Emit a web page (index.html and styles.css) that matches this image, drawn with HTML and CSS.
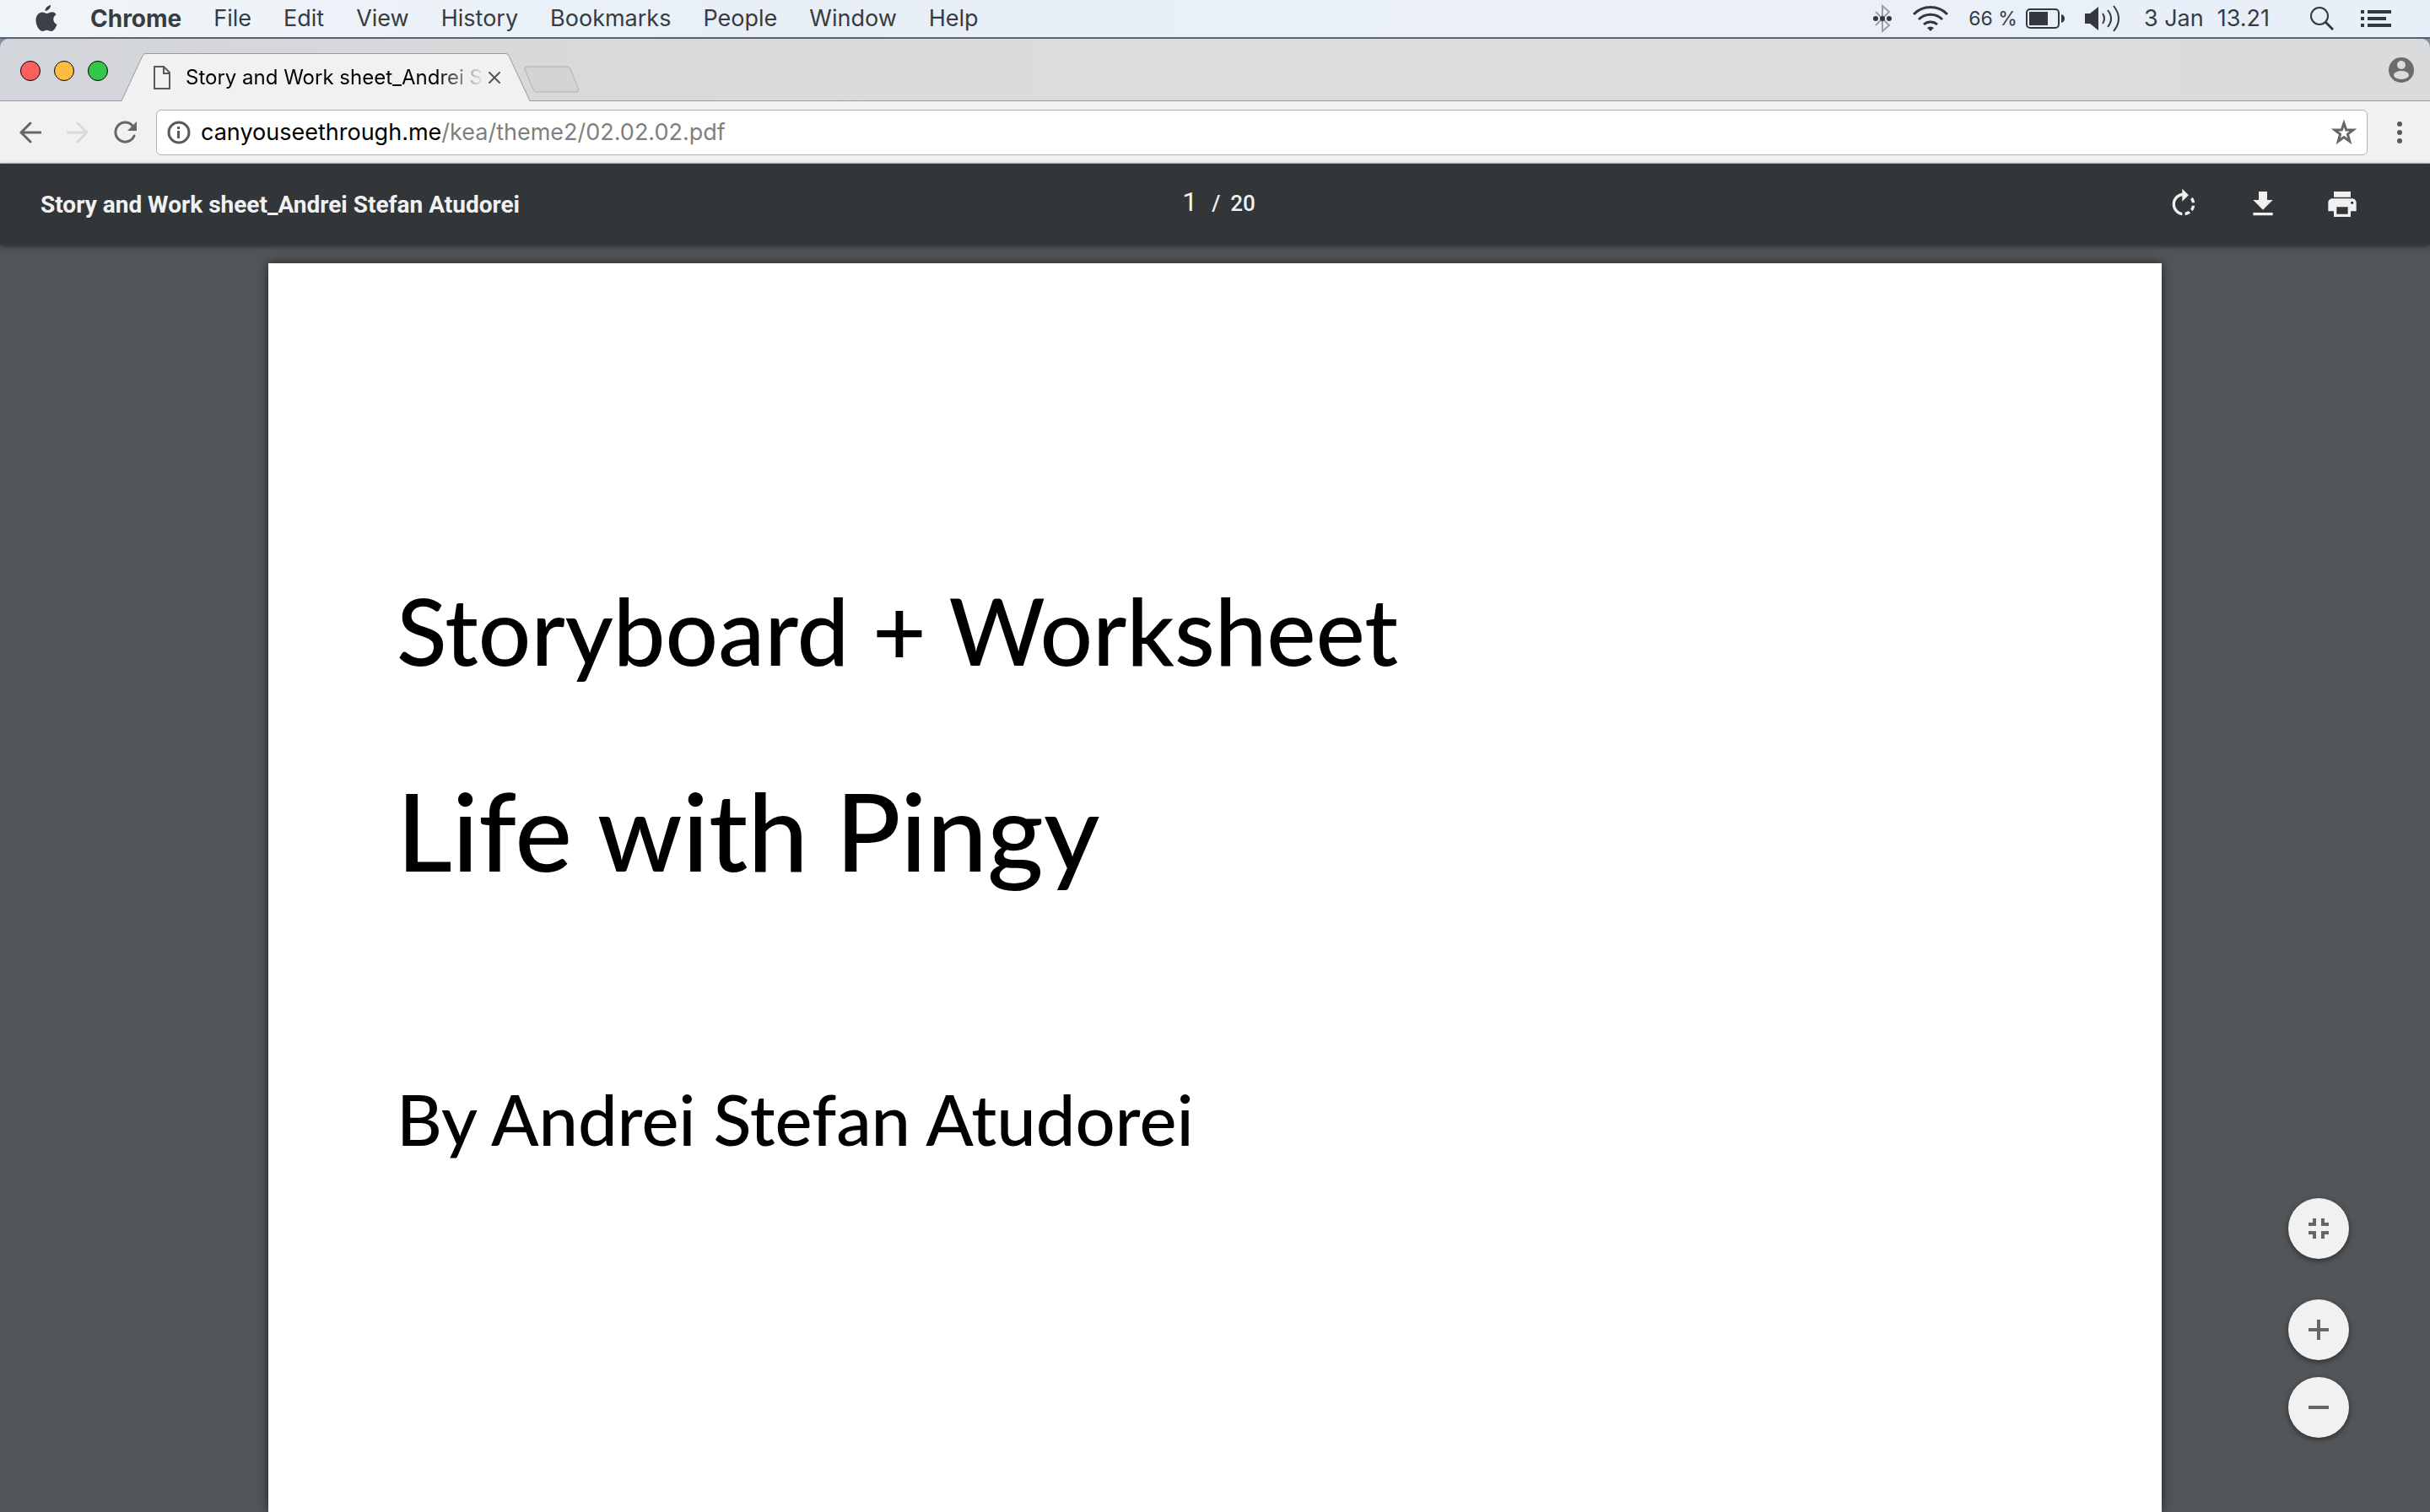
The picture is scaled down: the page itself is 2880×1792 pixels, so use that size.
FILE: index.html
```html
<!DOCTYPE html>
<html lang="en">
<head>
<meta charset="utf-8">
<title>Story and Work sheet_Andrei Stefan Atudorei</title>
<link rel="stylesheet" href="styles.css">
</head>
<body>
<header class="menubar">
  <nav class="menus" aria-label="Application menu">
    <button class="menu apple" aria-label="Apple menu"><svg width="28" height="34" viewBox="0 0 28 34"><path d="M19 1c.3 3-2.700 7-6.500 6.900C12.200 5 15.500 1.500 19 1zM25.500 12.200c-5 3.200-3.800 9.600 1 11.700-1.300 3.600-3.900 8.100-6.800 8.100-2 0-2.600-1.300-5.100-1.300S11.300 32 9.500 32C5.500 32 1.500 24.800 1.500 19c0-6 3.700-9.600 7.600-9.600 2.300 0 3.900 1.500 5.600 1.500 1.700 0 3.300-1.700 6.200-1.700 1.900 0 3.600 1.100 4.600 3z" fill="#3a4045"/></svg></button>
    <button class="menu app">Chrome</button>
    <button class="menu">File</button>
    <button class="menu">Edit</button>
    <button class="menu">View</button>
    <button class="menu">History</button>
    <button class="menu">Bookmarks</button>
    <button class="menu">People</button>
    <button class="menu">Window</button>
    <button class="menu">Help</button>
  </nav>
  <div class="status">
    <svg width="24" height="34" viewBox="0 0 24 34"><path d="M4 9l16 16-8 7V2l8 7L4 25" fill="none" stroke="#9a9fa8" stroke-width="2"/><g fill="#33383f"><circle cx="4" cy="17" r="3"/><circle cx="12" cy="17" r="3"/><circle cx="20" cy="17" r="3"/></g></svg>
    <svg width="42" height="32" viewBox="0 0 42 32"><g fill="none" stroke="#33383f" stroke-width="3"><path d="M1 11a28 28 0 0 1 40 0M7 17a20 20 0 0 1 28 0M13 23a12 12 0 0 1 16 0"/></g><path d="M17 27q4-3 8 0l-4 4z" fill="#33383f"/></svg>
    <span class="battery"><span class="percent">66 %</span><svg width="46" height="24" viewBox="0 0 46 24"><rect x="1" y="1" width="38" height="22" rx="4" fill="none" stroke="#33383f" stroke-width="2"/><rect x="4" y="4" width="22" height="16" fill="#33383f"/><path d="M42 7q4 1 4 5t-4 5z" fill="#33383f"/></svg></span>
    <svg width="42" height="32" viewBox="0 0 42 32"><path d="M0 10h6l10-8v28l-10-8H0z" fill="#33383f"/><g fill="none" stroke="#33383f" stroke-width="2"><path d="M21 10q4 6 0 12M27 6q8 10 0 20M34 1q12 15 0 30"/></g></svg>
    <time class="clock"><span>3 Jan</span><span>13.21</span></time>
    <svg class="search" width="28" height="28" viewBox="0 0 28 28"><g fill="none" stroke="#33383f"><circle cx="11" cy="11" r="10" stroke-width="2"/><path d="M18 18l9 9" stroke-width="3"/></g></svg>
    <svg width="36" height="20" viewBox="0 0 36 20"><path d="M0 0h4v4H0zM8 0h28v4H8zM0 8h4v4H0zM8 8h22v4H8zM0 16h4v4H0zM8 16h28v4H8z" fill="#33383f"/></svg>
  </div>
</header>

<div class="desktop"><div class="tabstrip">
  <div class="lights"><i class="red"></i><i class="yellow"></i><i class="green"></i></div>
  <div class="tab">
    <svg class="tabshape" width="484" height="57" viewBox="0 0 484 57"><path d="M0 57L25 3Q26 .5 29 .5H455Q458 .5 459 3L484 57z" fill="#f1f1f1"/><path d="M0 56.500L25 3Q26 .5 29 .5H455Q458 .5 459 3L484 56.500" fill="none" stroke="#999"/></svg>
    <svg width="20" height="28" viewBox="0 0 20 28"><path d="M1 1h11l7 7v19H1zM12 1v8h7" fill="none" stroke="#5a5a5a" stroke-width="2"/></svg>
    <span class="tabtitle">Story and Work sheet_Andrei S</span>
    <button class="tabclose" aria-label="Close tab"><svg width="14" height="14" viewBox="0 0 14 14"><path d="M1 1l12 12M13 1L1 13" stroke="#555" stroke-width="2" stroke-linecap="round"/></svg></button>
  </div>
  <button class="newtab" aria-label="New tab"><svg width="66" height="32" viewBox="0 0 66 32"><path d="M4 1h47q3 0 4 3l10 24q0 3-3 3H16q-3 0-5-3L1 4q0-3 3-3z" fill="#d3d4d4" stroke="#b0b1b2"/></svg></button>
  <button class="profile" aria-label="Profile"><svg width="30" height="30" viewBox="0 0 30 30"><circle cx="15" cy="15" r="15" fill="#6b6b6b"/><circle cx="15" cy="9" r="5" fill="#dcdcdc"/><ellipse cx="15" cy="21" rx="9" ry="5" fill="#dcdcdc"/></svg></button>
</div></div>

<div class="toolbar">
  <div class="history">
    <button aria-label="Back"><svg width="26" height="26" viewBox="0 0 26 26"><path d="M25 13H2M13 2L2 13l11 11" fill="none" stroke="#666" stroke-width="3" stroke-linecap="round"/></svg></button>
    <button aria-label="Forward" disabled><svg width="26" height="26" viewBox="0 0 26 26"><path d="M1 13h23M13 2l11 11-11 11" fill="none" stroke="#d9d9d9" stroke-width="3" stroke-linecap="round"/></svg></button>
    <button aria-label="Reload"><svg width="28" height="28" viewBox="0 0 28 28"><path d="M22 6A11.500 11.500 0 1 0 24 18" fill="none" stroke="#666" stroke-width="3" stroke-linecap="round"/><path d="M27 1v11H16z" fill="#666"/></svg></button>
  </div>
  <div class="omnibox">
    <svg width="28" height="28" viewBox="0 0 28 28"><circle cx="14" cy="14" r="12" fill="none" stroke="#5a5a5a" stroke-width="3"/><path d="M12 7h3v3h-3zM12 12h3v9h-3z" fill="#5a5a5a"/></svg>
    <a class="url" href="#document"><span class="host">canyouseethrough.me</span>/kea/theme2/02.02.02.pdf</a>
    <button aria-label="Bookmark this page"><svg width="30" height="30" viewBox="0 0 30 30"><path d="M15 4l2.700 8H26l-6.600 5 2.400 8.500L15 20.500l-6.800 5L10.600 17 4 12h8.300z" fill="none" stroke="#666" stroke-width="3"/></svg></button>
  </div>
  <button aria-label="Chrome menu"><svg width="6" height="26" viewBox="0 0 6 26"><g fill="#5a5a5a"><circle cx="3" cy="3" r="3"/><circle cx="3" cy="13" r="3"/><circle cx="3" cy="23" r="3"/></g></svg></button>
</div>

<div class="pdfbar">
  <h1 class="doctitle">Story and Work sheet_Andrei Stefan Atudorei</h1>
  <div class="pager"><input class="pagenum" aria-label="Page number" value="1"><span>/</span><span>20</span></div>
  <div class="actions">
    <button aria-label="Rotate clockwise"><svg viewBox="0 0 24 24"><path d="M15.550 5.550L11 1v3.070C7.060 4.560 4 7.920 4 12s3.050 7.440 7 7.930v-2.020c-2.840-.48-5-2.940-5-5.910s2.160-5.430 5-5.910V10l4.550-4.450zM19.930 11c-.17-1.390-.72-2.730-1.620-3.890l-1.420 1.420c.54.75.88 1.600 1.020 2.470h2.020zM13 17.900v2.020c1.390-.17 2.740-.71 3.900-1.610l-1.440-1.440c-.75.54-1.590.89-2.460 1.030zm3.890-2.420l1.420 1.410c.9-1.160 1.450-2.500 1.620-3.890h-2.020c-.14.87-.48 1.720-1.020 2.480z"/></svg></button>
    <button aria-label="Download"><svg viewBox="0 0 24 24"><path d="M19 9h-4V3H9v6H5l7 7 7-7zM5 18v2h14v-2H5z"/></svg></button>
    <button aria-label="Print"><svg viewBox="0 0 24 24"><path d="M19 8H5c-1.660 0-3 1.340-3 3v6h4v4h12v-4h4v-6c0-1.660-1.340-3-3-3zm-3 11H8v-5h8v5zm3-7c-.55 0-1-.45-1-1s.45-1 1-1 1 .45 1 1-.45 1-1 1zm-1-9H6v4h12V3z"/></svg></button>
  </div>
</div>

<main class="viewer" id="document">
  <article class="sheet">
    <h2 class="line storyboard">Storyboard + Worksheet</h2>
    <h2 class="line pingy">Life with Pingy</h2>
    <p class="line author">By Andrei Stefan Atudorei</p>
  </article>
  <div class="zoomer">
    <button class="fit" aria-label="Fit to page"><svg viewBox="0 0 24 24"><path d="M0 5v4h9V0H5v5zM15 0v9h9V5h-5V0zM0 15v4h5v5h4v-9zM15 15v9h4v-5h5v-4z"/></svg></button>
    <button aria-label="Zoom in"><svg viewBox="0 0 24 24"><path d="M10 0h4v10h10v4H14v10h-4V14H0v-4h10z"/></svg></button>
    <button aria-label="Zoom out"><svg viewBox="0 0 24 24"><path d="M0 10h24v4H0z"/></svg></button>
  </div>
</main>
</body>
</html>
```
FILE: styles.css
```css
* { box-sizing: border-box; }
body {
  margin: 0;
  height: 100vh;
  display: flex;
  flex-direction: column;
  overflow: hidden;
  background: #525659;
  font-family: Inter, "Liberation Sans", sans-serif;
}
button {
  margin: 0;
  padding: 0;
  border: 0;
  background: none;
  font: inherit;
  color: inherit;
}
svg { display: block; flex: none; }

.menubar {
  display: flex;
  justify-content: space-between;
  align-items: center;
  height: 46px;
  flex: none;
  padding: 0 46px 0 41px;
  border-bottom: 2px solid #58636f;
  background: linear-gradient(90deg, #f0f5f8, #e8eff7 30%, #ebeff9 75%, #e7eff8);
  color: #363c41;
  font-size: 27px;
  line-height: 44px;
}
.menus, .status { display: flex; align-items: center; }
.menus { gap: 38px; }
.app { font-size: 28px; font-weight: 700; }
.status { gap: 24px; }
.battery { display: flex; align-items: center; gap: 10px; font-size: 23px; }
.clock { display: flex; gap: 16px; margin: 0 24px 0 4px; }
.search { margin-right: 8px; }

.desktop { background: #7b92aa; flex: none; }
.tabstrip {
  display: flex;
  height: 74px;
  border-bottom: 1px solid #999;
  border-radius: 10px 10px 0 0;
  background: linear-gradient(90deg, #d2d5da, #dadada 30%, #dbdddc 60%, #dadbdc);
}
.lights { display: flex; gap: 16px; padding: 26px 24px 0; }
.lights i { width: 24px; height: 24px; border-radius: 50%; border: 1px solid; }
.red { background: #fc605c; border-color: #df4744; }
.yellow { background: #fdbc40; border-color: #de9f34; }
.green { background: #34c84a; border-color: #27aa35; }
.tab {
  position: relative;
  display: flex;
  align-items: center;
  width: 484px;
  height: 57px;
  margin: 17px 0 0 -8px;
  padding-left: 38px;
}
.tabshape { position: absolute; left: 0; top: 0; }
.tab > :not(.tabshape) { position: relative; }
.tabtitle {
  width: 354px;
  margin: 0 5px 0 18px;
  white-space: nowrap;
  font-size: 24px;
  line-height: 32px;
  color: #000;
  -webkit-mask-image: linear-gradient(90deg, #000 84%, transparent);
  mask-image: linear-gradient(90deg, #000 84%, transparent);
}
.newtab { align-self: flex-start; margin: 32px 0 0 -7px; }
.profile { margin: 0 19px 0 auto; }

.toolbar {
  display: flex;
  align-items: center;
  height: 74px;
  flex: none;
  padding: 0 33px 0 23px;
  border-bottom: 1px solid #c4c4c4;
  background: #f1f1f1;
}
.history { display: flex; gap: 30px; }
.omnibox {
  display: flex;
  align-items: center;
  flex: 1;
  height: 54px;
  margin: 0 35px 0 22px;
  padding: 0 12px;
  border: 1px solid #b4b4b4;
  border-radius: 6px;
  background: #fff;
}
.url {
  flex: 1;
  margin-left: 12px;
  color: #7f7f7f;
  text-decoration: none;
  font-size: 27px;
  line-height: 36px;
}
.host { color: #000; }

.pdfbar {
  position: relative;
  z-index: 1;
  display: grid;
  grid-template-columns: 1fr auto 1fr;
  align-items: center;
  height: 96px;
  flex: none;
  padding: 0 48px;
  background: #323639;
  color: #f1f1f1;
  font-family: Roboto, sans-serif;
  font-size: 28px;
  box-shadow: 0 2px 6px rgba(0, 0, 0, .5);
}
.doctitle { margin: 0; font-size: 28px; font-weight: 700; }
.pager { display: flex; align-items: baseline; gap: 12px; padding: 0 0 6px 4px; font-size: 26px; font-weight: 500; }
.pagenum { width: 28px; padding: 0; border: 0; background: none; color: inherit; font: 400 32px Roboto, sans-serif; text-align: center; }
.actions { display: flex; justify-content: flex-end; gap: 54px; padding-right: 36px; }
.actions svg { width: 40px; height: 40px; fill: #f1f1f1; }

.viewer { position: relative; flex: 1; min-height: 0; padding: 22px 318px 0; }
.sheet {
  height: 100%;
  padding: 374px 152px 0;
  background: #fff;
  box-shadow: 0 0 12px rgba(0, 0, 0, .6);
  color: #000;
  font-family: Lato, sans-serif;
}
.line { margin: 0; font-weight: 500; }
.storyboard { font-size: 110px; line-height: 120px; }
.pingy { margin-top: 108px; font-size: 128px; line-height: 140px; }
.author { margin-top: 222px; font-size: 83px; line-height: 100px; }

.zoomer {
  position: absolute;
  right: 96px;
  bottom: 88px;
  display: flex;
  flex-direction: column;
  gap: 20px;
}
.zoomer button {
  display: grid;
  place-items: center;
  width: 72px;
  height: 72px;
  border-radius: 50%;
  background: #f1f1f1;
  box-shadow: 0 2px 6px rgba(0, 0, 0, .5);
}
.zoomer .fit { margin-bottom: 28px; }
.zoomer svg { width: 24px; height: 24px; fill: #666; }
```
